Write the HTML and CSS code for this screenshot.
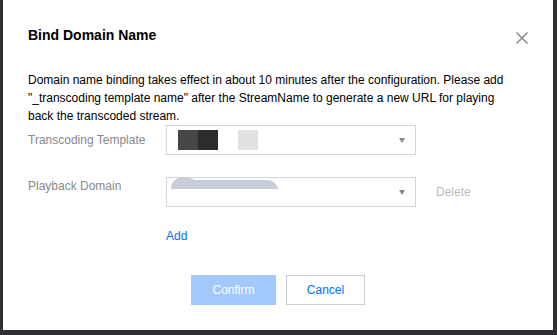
FILE: index.html
```html
<!DOCTYPE html>
<html>
<head>
<meta charset="utf-8">
<link rel="stylesheet" href="styles.css">
</head>
<body>
<div class="dialog">
  <div class="title">Bind Domain Name</div>
  <button class="close" aria-label="Close">
    <svg width="12" height="12" viewBox="0 0 12 12"><path d="M0.5 0.5L11.5 11.5M11.5 0.5L0.5 11.5" stroke="#888" stroke-width="1.5" fill="none"/></svg>
  </button>
  <p class="desc">Domain name binding takes effect in about 10 minutes after the configuration. Please add "_transcoding template name" after the StreamName to generate a new URL for playing back the transcoded stream.</p>
  <div class="row">
    <div class="label label-first">Transcoding Template</div>
    <div class="select">
      <div class="value">
        <span class="blk blk-a"></span><span class="blk blk-b"></span><span class="blk blk-c"></span>
      </div>
      <span class="arrow"></span>
    </div>
  </div>
  <div class="row row-second">
    <div class="label">Playback Domain</div>
    <div class="select">
      <svg class="blur" width="111" height="15" viewBox="0 0 111 15"><path d="M1 14C1 7 6 2 14 2C19 2 22 4 25 5L97 5C103 5 107 9 108 14Z" fill="#c8ced8"/></svg>
      <div class="value"></div>
      <span class="arrow"></span>
    </div>
    <span class="delete">Delete</span>
  </div>
  <div class="add-row"><a class="add">Add</a></div>
  <div class="footer">
    <button class="btn btn-primary">Confirm</button>
    <button class="btn btn-default">Cancel</button>
  </div>
</div>
</body>
</html>
```
FILE: styles.css
```css
html, body {
  margin: 0;
  padding: 0;
}
body {
  background: #2f3033;
  font-family: "Liberation Sans", Arial, sans-serif;
  font-size: 12px;
  color: #000;
  width: 557px;
  height: 335px;
  overflow: hidden;
}
.dialog {
  position: relative;
  box-sizing: border-box;
  width: 550px;
  height: 330px;
  margin-left: 3px;
  background: #fff;
  padding: 25px;
}
.title {
  font-size: 14px;
  font-weight: bold;
  line-height: 20px;
  color: #000;
}
.close {
  position: absolute;
  top: 32px;
  right: 25px;
  width: 12px;
  height: 12px;
  padding: 0;
  border: 0;
  background: none;
  display: block;
}
.close svg { display: block; }
.desc {
  margin: 26px 0 0 0;
  padding-right: 6px;
  line-height: 18px;
}
.row {
  display: flex;
  align-items: flex-start;
}
.row-second {
  margin-top: 22px;
}
.label {
  width: 138px;
  flex: none;
  color: #888;
  line-height: 18px;
}
.label-first {
  padding-top: 6px;
}
.select {
  position: relative;
  box-sizing: border-box;
  width: 250px;
  height: 30px;
  border: 1px solid #cfd5de;
  display: flex;
  align-items: center;
  padding: 0 10px 0 11px;
}
.value {
  flex: 1;
  display: flex;
  align-items: center;
  height: 20px;
}
.blk {
  display: block;
  width: 20px;
  height: 20px;
}
.blk-a { background: #464646; }
.blk-b { background: #2c2c2c; }
.blk-c { background: #e1e1e1; margin-left: 20px; }
.arrow {
  width: 0;
  height: 0;
  border-left: 3.5px solid transparent;
  border-right: 3.5px solid transparent;
  border-top: 5px solid #888;
  flex: none;
}
.blur {
  position: absolute;
  left: 3px;
  top: -3px;
}
.delete {
  margin-left: 20px;
  line-height: 30px;
  color: #bbb;
}
.add-row {
  margin-top: 20px;
  padding-left: 138px;
  line-height: 18px;
}
.add {
  color: #006eff;
  cursor: pointer;
}
.footer {
  margin-top: 30px;
  display: flex;
  justify-content: center;
  gap: 10px;
}
.btn {
  box-sizing: border-box;
  height: 30px;
  font-family: "Liberation Sans", Arial, sans-serif;
  font-size: 12px;
  padding: 0;
  border: 1px solid;
}
.btn-primary {
  width: 85px;
  background: #a3c8fc;
  border-color: #a3c8fc;
  color: #fff;
}
.btn-default {
  width: 79px;
  background: #fff;
  border-color: #c8ced8;
  color: #006eff;
}
```
